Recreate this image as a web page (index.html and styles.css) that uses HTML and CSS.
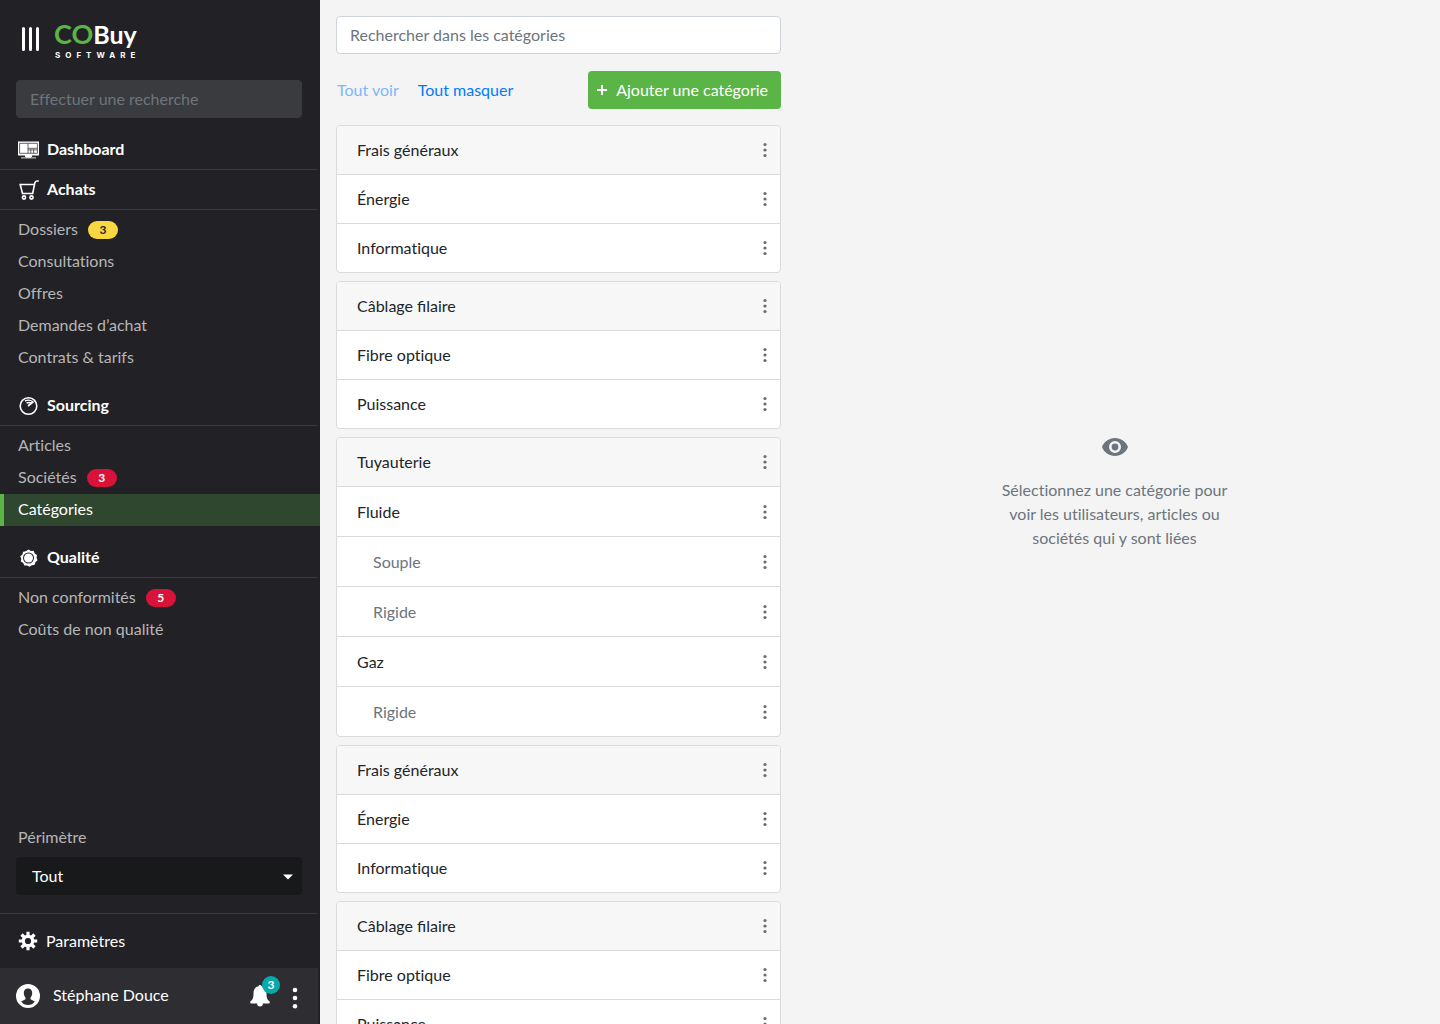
FILE: index.html
```html
<!DOCTYPE html>
<html lang="fr">
<head>
<meta charset="utf-8">
<meta name="viewport" content="width=device-width, initial-scale=1">
<title>COBuy Software – Catégories</title>
<link rel="stylesheet" href="styles.css">
</head>
<body>
<svg class="sprite" aria-hidden="true">
  <symbol id="dots" viewBox="0 0 6 16"><circle cx="3" cy="2.5" r="1.6"/><circle cx="3" cy="8" r="1.6"/><circle cx="3" cy="13.5" r="1.6"/></symbol>
</svg>
<div class="app">
  <aside class="sidebar">
    <header class="brand">
      <button class="icon-button" type="button" aria-label="Replier le menu">
        <svg width="18" height="24" viewBox="0 0 18 24" fill="none" stroke="#fff" stroke-width="3" stroke-linecap="round"><path d="M1.5 1.5v21M8.500 1.500v21M15.500 1.500v21"/></svg>
      </button>
      <a class="logo" href="#" aria-label="COBuy Software">
        <span class="logo-name"><span class="logo-co">CO</span>Buy</span>
        <span class="logo-tag">SOFTWARE</span>
      </a>
    </header>
    <input class="field sidebar-search" type="search" placeholder="Effectuer une recherche" aria-label="Effectuer une recherche">
    <nav class="menu">
      <a class="menu-title" href="#">
        <svg width="22" height="20" viewBox="0 0 22 20"><path fill="#fff" d="M0 1.500h21v14h-7v2H7v-2H0z"/><path fill="#999" d="M3 17h15v1.600H3z"/><path fill="#fff" d="M8 15h5v2.700H8z"/><path fill="none" stroke="#55555a" stroke-width=".9" d="M1.600 3.300h17.800v10H1.600zM10 3.300v10M10 8.300h9.400M10 9.900h9.400M12.800 9v4.300M15.600 9v4.300"/></svg>
        Dashboard
      </a>
      <section>
        <h2 class="menu-title">
          <svg width="22" height="20" viewBox="0 0 22 20" fill="none" stroke="#fff" stroke-width="1.600"><path d="M20.800 1H19Q17.300 1 16.800 3L14.700 13.500H4.500L2.200 4.500H16.500"/><circle cx="6" cy="17.500" r="1.600"/><circle cx="13.500" cy="17.500" r="1.600"/></svg>
          Achats
        </h2>
        <ul class="menu-list">
          <li><a href="#">Dossiers <span class="badge badge-yellow">3</span></a></li>
          <li><a href="#">Consultations</a></li>
          <li><a href="#">Offres</a></li>
          <li><a href="#">Demandes d’achat</a></li>
          <li><a href="#">Contrats &amp; tarifs</a></li>
        </ul>
      </section>
      <section>
        <h2 class="menu-title">
          <svg width="22" height="20" viewBox="0 0 22 20" fill="none" stroke="#fff"><circle cx="10.500" cy="10" r="8.300" stroke-width="1.600"/><path stroke-width="1.400" d="M7 5Q11 3 14.500 5.500M8.500 7.200Q11 6 13 7"/><path stroke-width="1.800" d="M15.500 5.500L10 10"/></svg>
          Sourcing
        </h2>
        <ul class="menu-list">
          <li><a href="#">Articles</a></li>
          <li><a href="#">Sociétés <span class="badge badge-red">3</span></a></li>
          <li><a class="active" href="#" aria-current="page">Catégories</a></li>
        </ul>
      </section>
      <section>
        <h2 class="menu-title">
          <svg width="22" height="20" viewBox="0 0 22 20" fill="#fff"><path fill-rule="evenodd" d="M10.500 1.500l2.300 1.600 2.800-.3 1.100 2.600 2.300 1.500-.5 2.900 1 2.500-2.100 1.900-.7 2.600-2.800.4-2.300 1.600-2.400-1.300-2.800.1-1.200-2.500-2.400-1.500.5-2.700-1-2.600 2.100-1.900.7-2.700 2.800-.4zM10.500 4.500a5.500 5.500 0 1 0 0 11 5.500 5.500 0 0 0 0-11z"/><circle cx="10.500" cy="10" r="4.500"/></svg>
          Qualité
        </h2>
        <ul class="menu-list">
          <li><a href="#">Non conformités <span class="badge badge-red">5</span></a></li>
          <li><a href="#">Coûts de non qualité</a></li>
        </ul>
      </section>
    </nav>
    <div class="scope">
      <label for="scope">Périmètre</label>
      <div class="select">
        <select id="scope"><option>Tout</option></select>
        <svg class="select-arrow" width="10" height="6" viewBox="0 0 10 6" fill="#fff"><path d="M0 .5h10L5 5.500z"/></svg>
      </div>
    </div>
    <a class="settings" href="#">
      <svg width="20" height="20" viewBox="0 0 20 20"><g stroke="#fff" stroke-width="3.200"><path d="M10 .8v18.400M.8 10h18.400M3.500 3.500l13 13M16.500 3.500l-13 13"/></g><circle cx="10" cy="10" r="6.300" fill="#fff"/><circle cx="10" cy="10" r="3.100" fill="#222226"/></svg>
      Paramètres
    </a>
    <footer class="user">
      <svg width="24" height="24" viewBox="0 0 24 24"><circle cx="12" cy="12" r="12" fill="#fff"/><path fill="#2d2d32" d="M12 4.500c2.800 0 4.200 1.800 4.200 4.500 0 2-.7 3.400-1.700 4.600v1.600l4.300 2.200c-1.600 2.200-4 3.600-6.800 3.600s-5.200-1.400-6.800-3.600l4.300-2.200v-1.600C8.500 12.400 7.800 11 7.800 9c0-2.700 1.400-4.500 4.200-4.500z"/></svg>
      <span class="user-name">Stéphane Douce</span>
      <button class="icon-button bell" type="button" aria-label="Notifications">
        <svg width="20" height="22" viewBox="0 0 20 22" fill="#fff"><path d="M10 0c.8 0 1.400.6 1.500 1.300 3.100.7 5 3.100 5 6.700 0 4.500.6 6.500 2.700 8 1 .8.7 2.600-.7 2.600h-5.600a2.900 2.900 0 0 1-5.800 0H1.500C.1 18.600-.2 16.800.8 16c2.100-1.500 2.700-3.500 2.700-8 0-3.600 1.900-6 5-6.700C8.600.6 9.200 0 10 0z"/></svg>
        <span class="bell-count">3</span>
      </button>
      <button class="icon-button" type="button" aria-label="Options du compte">
        <svg width="6" height="26" viewBox="0 -4 6 26" fill="#fff"><circle cx="3" cy="3" r="2.300"/><circle cx="3" cy="11" r="2.300"/><circle cx="3" cy="19.200" r="2.300"/></svg>
      </button>
    </footer>
  </aside>

  <main class="main">
    <section class="panel" aria-label="Catégories">
      <input class="field" type="search" placeholder="Rechercher dans les catégories" aria-label="Rechercher dans les catégories">
      <div class="toolbar">
        <button class="link" type="button" disabled>Tout voir</button>
        <button class="link" type="button">Tout masquer</button>
        <button class="add" type="button">
          <svg width="10" height="10" viewBox="0 0 10 10" stroke="#fff" stroke-width="2"><path d="M5 0v10M0 5h10"/></svg>
          Ajouter une catégorie
        </button>
      </div>
      <div class="cards">
        <ul class="card">
          <li class="row head">Frais généraux <button class="icon-button" type="button" aria-label="Options"><svg class="dots"><use href="#dots"/></svg></button></li>
          <li class="row">Énergie <button class="icon-button" type="button" aria-label="Options"><svg class="dots"><use href="#dots"/></svg></button></li>
          <li class="row">Informatique <button class="icon-button" type="button" aria-label="Options"><svg class="dots"><use href="#dots"/></svg></button></li>
        </ul>
        <ul class="card">
          <li class="row head">Câblage filaire <button class="icon-button" type="button" aria-label="Options"><svg class="dots"><use href="#dots"/></svg></button></li>
          <li class="row">Fibre optique <button class="icon-button" type="button" aria-label="Options"><svg class="dots"><use href="#dots"/></svg></button></li>
          <li class="row">Puissance <button class="icon-button" type="button" aria-label="Options"><svg class="dots"><use href="#dots"/></svg></button></li>
        </ul>
        <ul class="card nested">
          <li class="row head">Tuyauterie <button class="icon-button" type="button" aria-label="Options"><svg class="dots"><use href="#dots"/></svg></button></li>
          <li class="row">Fluide <button class="icon-button" type="button" aria-label="Options"><svg class="dots"><use href="#dots"/></svg></button></li>
          <li class="row child">Souple <button class="icon-button" type="button" aria-label="Options"><svg class="dots"><use href="#dots"/></svg></button></li>
          <li class="row child">Rigide <button class="icon-button" type="button" aria-label="Options"><svg class="dots"><use href="#dots"/></svg></button></li>
          <li class="row">Gaz <button class="icon-button" type="button" aria-label="Options"><svg class="dots"><use href="#dots"/></svg></button></li>
          <li class="row child">Rigide <button class="icon-button" type="button" aria-label="Options"><svg class="dots"><use href="#dots"/></svg></button></li>
        </ul>
        <ul class="card">
          <li class="row head">Frais généraux <button class="icon-button" type="button" aria-label="Options"><svg class="dots"><use href="#dots"/></svg></button></li>
          <li class="row">Énergie <button class="icon-button" type="button" aria-label="Options"><svg class="dots"><use href="#dots"/></svg></button></li>
          <li class="row">Informatique <button class="icon-button" type="button" aria-label="Options"><svg class="dots"><use href="#dots"/></svg></button></li>
        </ul>
        <ul class="card">
          <li class="row head">Câblage filaire <button class="icon-button" type="button" aria-label="Options"><svg class="dots"><use href="#dots"/></svg></button></li>
          <li class="row">Fibre optique <button class="icon-button" type="button" aria-label="Options"><svg class="dots"><use href="#dots"/></svg></button></li>
          <li class="row">Puissance <button class="icon-button" type="button" aria-label="Options"><svg class="dots"><use href="#dots"/></svg></button></li>
        </ul>
      </div>
    </section>
    <section class="empty">
      <svg width="26" height="18" viewBox="0 0 26 18"><path fill="#6c757d" fill-rule="evenodd" d="M13 0c5.900 0 10.900 3.700 13 9-2.100 5.300-7.100 9-13 9S2.100 14.300 0 9c2.100-5.300 7.100-9 13-9zm0 3a6 6 0 1 0 0 12 6 6 0 0 0 0-12z"/><circle cx="13" cy="9" r="3.400" fill="#6c757d"/></svg>
      <p>Sélectionnez une catégorie pour voir les utilisateurs, articles ou sociétés qui y sont liées</p>
    </section>
  </main>
</div>
</body>
</html>
```
FILE: styles.css
```css
* { box-sizing: border-box; }

body {
  margin: 0;
  background: #f4f4f4;
  color: #212529;
  font: 16px/24px Lato, "Liberation Sans", sans-serif;
  font-variant-ligatures: no-common-ligatures;
}

ul, h2, p { margin: 0; padding: 0; }
ul { list-style: none; }
a { color: inherit; text-decoration: none; }
svg { display: block; flex: none; }
.sprite { position: absolute; width: 0; height: 0; }

button, input, select { font: inherit; color: inherit; }
button { padding: 0; border: 0; background: none; cursor: pointer; }

.icon-button { display: flex; align-items: center; justify-content: center; }

.app {
  display: grid;
  grid-template-columns: 320px minmax(0, 1fr);
  height: 100vh;
}

/* Sidebar */
.sidebar {
  display: flex;
  flex-direction: column;
  min-height: 0;
  background: #222226;
  color: #fff;
}

.brand {
  display: flex;
  align-items: flex-start;
  gap: 14px;
  padding: 20px 22px 0;
  height: 80px;
}
.brand .icon-button { margin-top: 7px; }

.logo { display: flex; flex-direction: column; }
.logo-name { font-size: 25px; line-height: 28px; font-weight: 700; }
.logo-co { color: #5ab446; font-size: 27px; }
.logo-tag {
  padding: 2px 0 0 1px;
  font-family: Inter, "Liberation Sans", sans-serif;
  font-size: 8px;
  line-height: 10px;
  font-weight: 700;
  letter-spacing: 5px;
}

.field {
  display: block;
  width: 100%;
  height: 38px;
  padding: 0 13px 2px;
  border: 1px solid #ced4da;
  border-radius: 4px;
  background: #fff;
  outline-offset: 0;
  appearance: none;
}
.field::placeholder { color: #6c757d; opacity: 1; }

.sidebar-search {
  flex: none;
  width: auto;
  margin: 0 18px 0 16px;
  border-color: #3a3b3f;
  background: #3a3b3f;
}

.menu { padding-top: 12px; flex: 1; min-height: 0; }
.menu section + section { margin-top: 12px; }

.menu-title {
  display: flex;
  align-items: flex-start;
  gap: 7px;
  height: 40px;
  margin-right: 2px;
  padding: 7px 0 0 18px;
  border-bottom: 1px solid #3a3a3e;
  font-size: 16px;
  font-weight: 700;
}
.menu-title svg { margin-top: 3px; }

.menu-list { padding-top: 4px; color: #b6b6b8; }
.menu-list a {
  display: flex;
  align-items: flex-start;
  gap: 10px;
  height: 32px;
  padding: 3px 0 0 18px;
}
.menu-list .active {
  padding-left: 14px;
  border-left: 4px solid #5ab446;
  background: #2f472f;
  color: #fff;
}

.badge {
  width: 30px;
  height: 18px;
  margin-top: 4px;
  border-radius: 9px;
  font-size: 12px;
  line-height: 18px;
  font-weight: 700;
  text-align: center;
}
.badge-yellow { background: #f7d842; color: #212529; }
.badge-red { background: #d9123a; color: #fff; }

.scope { padding: 0 18px 18px 16px; }
.scope label { display: block; padding: 0 2px 8px; color: #b6b6b8; }
.select { position: relative; }
.select select {
  display: block;
  width: 100%;
  height: 38px;
  padding: 0 16px;
  border: 0;
  border-radius: 4px;
  background: #17191a;
  appearance: none;
}
.select-arrow { position: absolute; top: 17px; right: 9px; pointer-events: none; }

.settings {
  display: flex;
  align-items: center;
  gap: 8px;
  height: 55px;
  margin-right: 2px;
  padding-left: 18px;
  border-top: 1px solid #3a3a3e;
}

.user {
  display: flex;
  align-items: center;
  height: 56px;
  margin-right: 2px;
  padding: 0 20px 0 16px;
  background: #2d2d32;
}
.user-name { flex: 1; padding: 0 0 2px 13px; }
.bell { position: relative; margin-right: 22px; }
.bell-count {
  position: absolute;
  top: -9px;
  left: 12px;
  width: 18px;
  height: 18px;
  border-radius: 9px;
  background: #07a9aa;
  font-size: 12px;
  line-height: 18px;
  font-weight: 700;
}

/* Content */
.main {
  display: grid;
  grid-template-columns: minmax(0, 469px) minmax(0, 1fr);
  min-height: 0;
}

.panel {
  min-height: 0;
  padding: 16px 8px 16px 16px;
  overflow-y: auto;
  scrollbar-width: none;
}

.toolbar {
  display: flex;
  align-items: center;
  gap: 19px;
  padding: 17px 0 16px 1px;
}
.link { color: #007bff; }
.link:disabled { opacity: 0.5; cursor: default; }
.add {
  display: flex;
  align-items: center;
  gap: 9px;
  height: 38px;
  margin-left: auto;
  padding: 0 13px 0 9px;
  border-radius: 4px;
  background: #5ab446;
  color: #fff;
}

.cards { display: flex; flex-direction: column; gap: 8px; }
.card {
  border: 1px solid #d9dadb;
  border-radius: 4px;
  background: #fff;
  overflow: hidden;
}
.row {
  display: flex;
  align-items: center;
  justify-content: space-between;
  height: 49px;
  padding: 0 8px 0 20px;
}
.row + .row { border-top: 1px solid #d9dadb; }
.row.head {
  height: 48px;
  background: #f7f7f7;
  font-variant-ligatures: normal;
}
.nested .row:not(.head) { height: 50px; }
.row.child { padding-left: 36px; color: #6c757d; }
.row .icon-button { width: 14px; height: 24px; }
.dots { width: 6px; height: 16px; fill: #6b6b6b; }

.empty {
  display: flex;
  flex-direction: column;
  align-items: center;
  justify-content: center;
  gap: 22px;
  padding-bottom: 36px;
  color: #6c757d;
  text-align: center;
}
.empty p { max-width: 240px; }
```
